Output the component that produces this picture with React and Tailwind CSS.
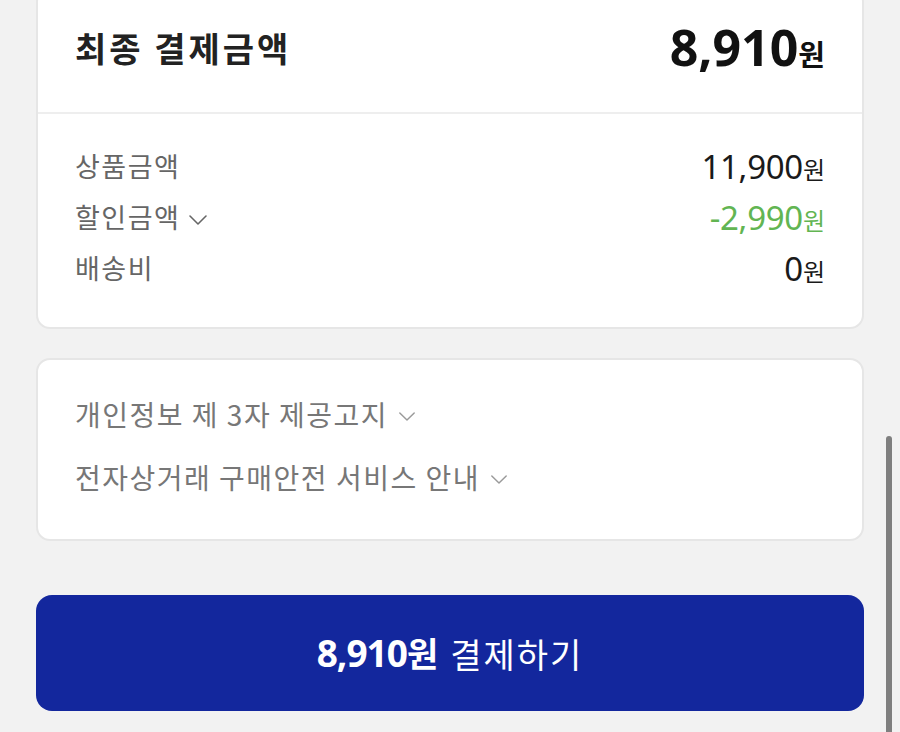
import React from 'react';

const kr = { fontFamily: '"Noto Sans CJK KR", "Noto Sans", sans-serif' };
const num = { fontFamily: '"Noto Sans", "Noto Sans CJK KR", sans-serif' };

const Chevron = ({ className = '' }) => (
  <svg viewBox="0 0 20 12" className={className} fill="none" stroke="currentColor" strokeWidth="1.6" strokeLinecap="round" strokeLinejoin="round">
    <path d="M2 2l8 8 8-8" />
  </svg>
);

const rows = [
  { label: '상품금액', value: '11,900', tone: 'text-[#1a1a1a]' },
  { label: '할인금액', value: '-2,990', tone: 'text-[#62b552]', toggle: true },
  { label: '배송비', value: '0', tone: 'text-[#1a1a1a]' },
];

const notices = ['개인정보 제 3자 제공고지', '전자상거래 구매안전 서비스 안내'];

export default function App() {
  return (
    <div className="relative h-[732px] overflow-hidden bg-[#f2f2f2] px-[36px]" style={kr}>
      {/* 최종 결제금액 */}
      <div className="-mt-[12px] rounded-[14px] border-2 border-[#e6e6e6] bg-white">
        <div className="flex h-[122px] items-center justify-between px-[37px] pb-[8px] pt-0">
          <span className="text-[34px] font-semibold tracking-[3px] text-[#222]">최종 결제금액</span>
          <span className="flex items-baseline text-[#111]">
            <span className="text-[50px] font-bold tracking-[0px]" style={num}>8,910</span>
            <span className="text-[29px] font-bold" style={kr}>원</span>
          </span>
        </div>
        <div className="border-t-2 border-[#eeeeee] px-[37px] pb-[33px] pt-[27px]">
          {rows.map((row) => (
            <div key={row.label} className="flex h-[51px] items-center justify-between">
              <span className="flex items-center gap-[8px] text-[27px] tracking-[1.5px] text-[#666]">
                {row.label}
                {row.toggle && <Chevron className="mt-[4px] h-[12px] w-[20px] text-[#666]" />}
              </span>
              <span className={`flex items-baseline ${row.tone}`}>
                <span className="text-[33px] tracking-[-0.3px]" style={num}>{row.value}</span>
                <span className="text-[24px]" style={kr}>원</span>
              </span>
            </div>
          ))}
        </div>
      </div>

      {/* 안내 */}
      <div className="mt-[29px] rounded-[14px] border-2 border-[#e6e6e6] bg-white px-[37px] pb-[31px] pt-[22px]">
        {notices.map((text) => (
          <div key={text} className="flex h-[63px] items-center gap-[10px] text-[28px] tracking-[1.5px] text-[#777]">
            {text}
            <Chevron className="mt-[6px] h-[11px] w-[18px] text-[#9a9a9a]" />
          </div>
        ))}
      </div>

      {/* 결제 버튼 */}
      <button className="mt-[54px] flex h-[116px] w-full items-center justify-center gap-[12px] rounded-[16px] bg-[#13279d] text-white">
        <span className="flex items-baseline">
          <span className="text-[37px] font-bold tracking-[-1px]" style={num}>8,910</span>
          <span className="text-[34px] font-bold" style={kr}>원</span>
        </span>
        <span className="text-[34px] tracking-[2px]">결제하기</span>
      </button>

      <div className="absolute bottom-0 right-[8px] top-[436px] w-[6px] rounded-t-full bg-[#7f7f7f]" />
    </div>
  );
}
